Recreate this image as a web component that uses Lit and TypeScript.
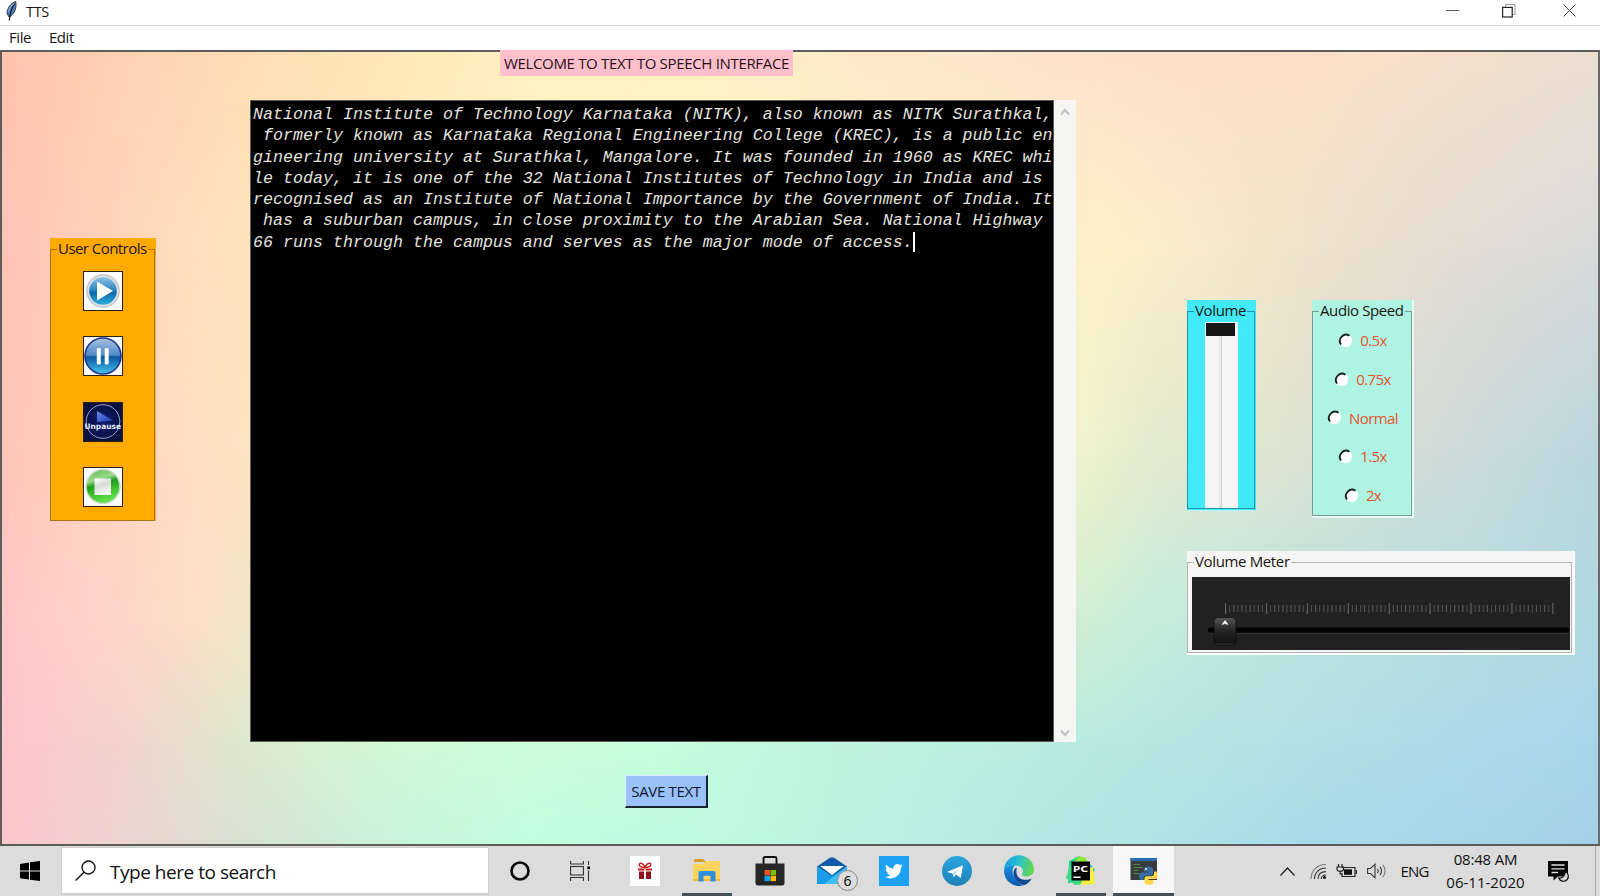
import { LitElement, html, css, svg } from "lit";
import { customElement, state } from "lit/decorators.js";

const LINES = [
  "National Institute of Technology Karnataka (NITK), also known as NITK Surathkal,",
  " formerly known as Karnataka Regional Engineering College (KREC), is a public en",
  "gineering university at Surathkal, Mangalore. It was founded in 1960 as KREC whi",
  "le today, it is one of the 32 National Institutes of Technology in India and is ",
  "recognised as an Institute of National Importance by the Government of India. It",
  " has a suburban campus, in close proximity to the Arabian Sea. National Highway ",
  "66 runs through the campus and serves as the major mode of access.",
];

const SPEEDS = ["0.5x", "0.75x", "Normal", "1.5x", "2x"];

/* ---------- group box ---------- */
@customElement("group-box")
class GroupBox extends LitElement {
  static properties = { label: {} };
  declare label: string;
  static styles = css`
    :host { display: block; box-sizing: border-box; font: 15px "Open Sans", "Noto Sans", sans-serif; color: #1c1410; }
    fieldset { box-sizing: border-box; height: 100%; margin: 0; padding: 0; min-width: 0;
      border: 1px solid var(--line, #888); }
    legend { margin-left: 6px; padding: 0 1px; line-height: 21px; height: 22px; white-space: nowrap;
      letter-spacing: var(--track, -0.4px); }
  `;
  render() {
    return html`<fieldset><legend>${this.label}</legend><slot></slot></fieldset>`;
  }
}

/* ---------- left hand buttons ---------- */
@customElement("user-controls")
class UserControls extends LitElement {
  static styles = css`
    :host { display: block; }
    group-box { height: 283px; width: 106px; padding: 0 1px 0 0; background: #ffaa00; --line: #a87414; --track: -0.55px; }
    .stack { display: flex; flex-direction: column; align-items: center; gap: 25.3px; padding: 11px 0 0 1px; }
    button { width: 40px; height: 40px; padding: 0; border: 1px solid #2a2010; background: #fff; display: block; }
    svg { display: block; width: 38px; height: 38px; }
    .cap { font: bold 7.6px "DejaVu Sans", sans-serif; fill: #e8ecf8; }
  `;
  render() {
    return html`<group-box label="User Controls"><div class="stack">
      <button><svg viewBox="0 0 38 38">
        <defs><linearGradient id="a" x1="0" y1="0" x2="0" y2="1"><stop offset="0" stop-color="#8fc4e4"/><stop offset=".45" stop-color="#2b86c0"/><stop offset=".55" stop-color="#0c69a8"/><stop offset="1" stop-color="#2fb0e0"/></linearGradient></defs>
        <circle cx="19" cy="19" r="16.8" fill="#c3c6ca"/><circle cx="19" cy="19" r="15.4" fill="#dde0e3"/>
        <circle cx="19" cy="19" r="13.8" fill="url(#a)"/><path d="M13 9.5 L29 19 L13 28.500Z" fill="#fff"/></svg></button>
      <button><svg viewBox="0 0 38 38">
        <defs><linearGradient id="b" x1="0" y1="0" x2="0" y2="1"><stop offset="0" stop-color="#a9c3e2"/><stop offset=".48" stop-color="#4e88c4"/><stop offset=".52" stop-color="#0a57a0"/><stop offset="1" stop-color="#45c4ee"/></linearGradient></defs>
        <circle cx="19" cy="19" r="18" fill="url(#b)" stroke="#24308c" stroke-width="1.6"/>
        <rect x="12.800" y="11" width="4" height="16.500" rx="1.500" fill="#fff"/><rect x="20.700" y="11" width="4" height="16.500" rx="1.500" fill="#fff"/></svg></button>
      <button><svg viewBox="0 0 38 38">
        <defs><linearGradient id="c" x1="0" y1="0" x2="1" y2="1"><stop offset="0" stop-color="#6a8af0"/><stop offset="1" stop-color="#1c36a8"/></linearGradient>
        <radialGradient id="d"><stop offset="0" stop-color="#0e1c70"/><stop offset="1" stop-color="#0a1040"/></radialGradient></defs>
        <rect width="38" height="38" fill="url(#d)"/><circle cx="19" cy="18.500" r="16.800" fill="none" stroke="#98a4cc" stroke-width="1"/>
        <path d="M13 8 L29 17.500 L13 19Z" fill="url(#c)"/><text class="cap" x="0.500" y="25.500" textLength="36.500" lengthAdjust="spacingAndGlyphs">Unpause</text></svg></button>
      <button><svg viewBox="0 0 38 38">
        <defs><linearGradient id="e" x1="0" y1="0" x2=".3" y2="1"><stop offset="0" stop-color="#5cb84c"/><stop offset=".35" stop-color="#9cdc8a"/><stop offset=".5" stop-color="#1f9c1a"/><stop offset="1" stop-color="#5fe048"/></linearGradient>
        <linearGradient id="f" x1="0" y1="0" x2=".4" y2="1"><stop offset="0" stop-color="#fff"/><stop offset=".5" stop-color="#d8dcd8"/><stop offset="1" stop-color="#fafafa"/></linearGradient></defs>
        <circle cx="19" cy="18.500" r="17.800" fill="#cfdccf"/><circle cx="19" cy="18.500" r="16.200" fill="url(#e)"/>
        <rect x="10.500" y="10.500" width="16.500" height="16.500" fill="url(#f)"/></svg></button>
    </div></group-box>`;
  }
}

/* ---------- editor ---------- */
@customElement("text-editor")
class TextEditor extends LitElement {
  static styles = css`
    :host { display: flex; width: 826px; height: 642px; }
    .page { width: 804px; box-sizing: border-box; background: #000; border: 1px solid #5a5a58; padding: 3px 0 0 2px; overflow: hidden; }
    .line { white-space: pre; font: italic 16.64px/21.25px "Liberation Mono", monospace; letter-spacing: 0.018px; color: #e2e2de; height: 21.25px; display: flex; align-items: center; }
    .caret { width: 2px; height: 20px; background: #fff; }
    .bar { width: 22px; background: #f5f5f4; display: flex; flex-direction: column; justify-content: space-between; align-items: center; padding: 8px 0 5px; box-sizing: border-box; }
    svg { width: 10px; height: 8px; display: block; fill: none; stroke: #c4c4c4; stroke-width: 2.2; }
  `;
  render() {
    return html`<div class="page">${LINES.map((l, i) => html`<div class="line">${l}${i === LINES.length - 1 ? html`<span class="caret"></span>` : ""}</div>`)}</div>
      <div class="bar"><svg viewBox="0 0 10 8"><path d="M1 6.500 L5 2 L9 6.500"/></svg><svg viewBox="0 0 10 8"><path d="M1 1.500 L5 6 L9 1.500"/></svg></div>`;
  }
}

/* ---------- right hand panels ---------- */
@customElement("audio-panels")
class AudioPanels extends LitElement {
  static styles = css`
    :host { display: flex; flex-direction: column; width: 388px; gap: 33px; }
    .top { display: flex; gap: 56px; align-items: flex-start; }
    .vol { width: 69px; height: 211px; background: #42e9f9; --line: #2594a6; --track: -0.35px; padding-right: 1px; padding-bottom: 1px; border-bottom: 1px solid #b8f8fc; }
    .trough { width: 33px; height: 186px; margin: 0 0 0 17px; background: #f5f5f5; display: flex; flex-direction: column; align-items: center; }
    .knob { width: 29px; height: 13px; margin: 1px 2px 0 0; background: #161616; }
    .groove { width: 3px; flex: 1; background: #e9e9e9; border: solid #d2d2d2; border-width: 0 1px 1px 0; box-sizing: border-box; margin-right: 2px; }
    .speed { width: 102px; height: 218px; background: #aff4e3; --line: #7d9c98; --track: -0.4px; border: solid #e9faf6; border-width: 0 2px 2px 0; }
    .options { display: flex; flex-direction: column; align-items: center; margin: -1px 0 0 1px; }
    label { display: flex; align-items: center; height: 38.700px; gap: 7px; color: #e2552e; letter-spacing: -0.6px; }
    label svg { width: 15px; height: 15px; }
    .meter { width: 388px; height: 104px; background: #f5f5f5; --line: #b4b4b4; --track: -0.36px; border: solid #fff; border-width: 0 2px 2px 0; padding-right: 1px; }
    .meter svg { display: block; width: 378px; height: 73px; margin: 4px 0 0 4px; }
  `;
  render() {
    const ticks = Array.from({ length: 81 }, (_, i) => {
      const major = i % 10 === 0;
      return svg`<rect x=${33 + i * 4.09} y=${major ? 26 : 28} width="1.200" height=${major ? 11 : i % 5 ? 7 : 8} fill=${major ? "#606060" : i % 2 ? "#484848" : "#555"}/>`;
    });
    return html`
      <div class="top">
        <group-box class="vol" label="Volume"><div class="trough"><div class="knob"></div><div class="groove"></div></div></group-box>
        <group-box class="speed" label="Audio Speed"><div class="options">${SPEEDS.map((s) => html`<label>
          <svg viewBox="0 0 15 15"><circle cx="7.500" cy="7.500" r="6.600" fill="#fff" /><path d="M3 11.500 A6.200 6.200 0 0 1 11.500 2.800" fill="none" stroke="#1a2423" stroke-width="1.900"/></svg><span>${s}</span></label>`)}</div></group-box>
      </div>
      <group-box class="meter" label="Volume Meter"><svg viewBox="0 0 378 73">
        <defs><linearGradient id="k" x1="0" y1="0" x2="0" y2="1"><stop offset="0" stop-color="#565656"/><stop offset=".45" stop-color="#262626"/><stop offset=".9" stop-color="#141414"/><stop offset="1" stop-color="#333"/></linearGradient></defs>
        <rect width="378" height="73" fill="#212121"/>${ticks}
        <rect x="16" y="50.500" width="361" height="5" rx="2" fill="#020202"/><rect x="18" y="56" width="359" height="1" fill="#303030"/>
        <rect x="22" y="40.500" width="22" height="28" rx="4" fill="url(#k)" stroke="#101010" stroke-width=".8"/>
        <path d="M30 47.500 L33 43.500 L36 47.500 L33 46.500Z" fill="#fff" stroke="#fff" stroke-width=".6"/></svg></group-box>`;
  }
}

/* ---------- taskbar ---------- */
@customElement("task-bar")
class TaskBar extends LitElement {
  static styles = css`
    :host { display: flex; height: 50px; background: #dcdcdc; align-items: stretch; font-family: "Open Sans", "Noto Sans", sans-serif; color: #111; }
    svg { display: block; overflow: visible; }
    .start { width: 61px; display: flex; align-items: center; justify-content: center; padding-right: 1px; box-sizing: border-box; }
    .search { width: 428px; margin: 1px 0 1px; box-sizing: border-box; border: 1px solid #cfcfcf; border-bottom-width: 2px; background: #fff; display: flex; align-items: center; padding-left: 13px; gap: 14px; font-size: 19px; letter-spacing: -0.47px; }
    .search span { padding-top: 2px; }
    .apps { display: flex; }
    .app { width: 62.350px; display: flex; align-items: center; justify-content: center; box-sizing: border-box; }
    .open { background: linear-gradient(#454f58, #454f58) center bottom / 50px 3px no-repeat; }
    .active { background: linear-gradient(#454f58, #454f58) center bottom / 61px 3px no-repeat, linear-gradient(#f7f7f7, #f7f7f7) center / 61px 100% no-repeat; }
    .view { margin-right: 5px; }
    .tray { margin-left: auto; display: flex; align-items: center; }
    .wifi { margin-left: 15px; }
    .power, .sound { margin-left: 10px; }
    .lang { font-size: 15px; letter-spacing: -0.8px; width: 28px; margin: 0 17px 0 14px; }
    .clock { width: 80px; text-align: center; font-size: 15px; line-height: 23.500px; letter-spacing: -0.2px; white-space: nowrap; }
    .clock .date { letter-spacing: 0; }
    .note { margin: 0 26.500px 0 22px; }
    .desk { width: 5px; height: 50px; border-left: 1px solid #a8a8a8; box-sizing: border-box; }
    .num { font: 14px "Open Sans", sans-serif; }
    .pc { font: bold 9.500px "Open Sans", sans-serif; fill: #fff; }
  `;
  render() {
    return html`
      <div class="start"><svg width="20" height="20" viewBox="0 0 20 20"><path d="M0 3 L9 1.500 V9.500 H0Z M10 1.300 L20 0 V9.500 H10Z M0 10.500 H9 V18.500 L0 17.200Z M10 10.500 H20 V20 L10 18.700Z" fill="#000"/></svg></div>
      <div class="search"><svg width="21" height="21" viewBox="0 0 21 21" fill="none" stroke="#111" stroke-width="1.400"><circle cx="13.500" cy="7.500" r="6.500"/><path d="M9 12.200 L.6 20.400"/></svg><span>Type here to search</span></div>
      <div class="apps">
        <div class="app"><svg width="20" height="20"><circle cx="10" cy="10" r="8.500" fill="none" stroke="#0a0a0a" stroke-width="2.600"/></svg></div>
        <div class="app"><svg class="view" width="20" height="20" viewBox="0 0 20 20" fill="none" stroke="#333" stroke-width="1.100"><path d="M.6 0 V3 H13.400 V0 M.6 20 V16.500 H13.400 V20"/><rect x=".6" y="5.500" width="12.800" height="8.500"/><path d="M18.500 0 V4 M18.500 9.500 V20"/><path d="M17.300 5.500 H20 V8.200 H17.300Z" fill="#000" stroke="none"/></svg></div>
        <div class="app"><svg width="30" height="30" viewBox="0 0 30 30"><rect width="30" height="30" fill="#fff"/><path d="M8 12.500 H14.300 V14.500 H8Z M15.700 12.500 H22 V14.500 H15.700Z" fill="#c8141c"/><path d="M9 15.500 H14 V23 H9Z M16 15.500 H21 V23 H16Z" fill="#94101a"/><path d="M15 11.500 C10 11.500 8.500 9.500 9.500 7.800 C11 6.200 14 8.500 15 11.500 C16 8.500 19 6.200 20.500 7.800 C21.500 9.500 20 11.500 15 11.500" fill="none" stroke="#c8141c" stroke-width="1.400"/></svg></div>
        <div class="app open"><svg width="28" height="24" viewBox="0 0 28 24"><path d="M1 1.500 Q1 0 2.500 0 H10 L13 3 H1Z" fill="#d99a1c"/><path d="M0 5 H10 L13 2 H27 V22 H0Z" fill="#ffd35c"/><path d="M0 20 H27 V22 H0Z" fill="#f2b93c"/><path d="M5.500 22.500 V13.500 Q5.500 12 7 12 H21 Q22.500 12 22.500 13.500 V22.500 H17.500 V16.800 H10.500 V22.500Z" fill="#2c8fe0"/></svg></div>
        <div class="app"><svg width="30" height="30" viewBox="0 0 30 30"><path d="M8.500 8 V2.500 Q8.500 1 10 1 H20 Q21.500 1 21.500 2.500 V8" fill="none" stroke="#111" stroke-width="1.900"/><path d="M.5 7.500 H29.500 V27 Q29.500 29.500 27 29.500 H3 Q.5 29.500 .5 27Z" fill="#262626"/><rect x="9.500" y="14" width="5.500" height="5.300" fill="#f25022"/><rect x="15.500" y="14" width="5.500" height="5.300" fill="#7fba00"/><rect x="9.500" y="19.800" width="5.500" height="5.300" fill="#00a4ef"/><rect x="15.500" y="19.800" width="5.500" height="5.300" fill="#ffb900"/></svg></div>
        <div class="app"><svg width="30" height="28" viewBox="0 0 30 28"><path d="M0 9.500 L13 .8 Q15 -.3 17 .8 L30 9.500 L15 20Z" fill="#0f5ba8"/><path d="M0 9.500 L15 19 L30 9.500 V27 H0Z" fill="#1c9be8"/><path d="M30 9.500 L7 27 H30Z" fill="#3fc0f6"/><path d="M3 9 L15 18 L27 9Z" fill="#fff"/><circle cx="30.500" cy="23.500" r="10" fill="#dcdcdc" stroke="#888" stroke-width="1"/><text class="num" x="26.500" y="28.700">6</text></svg></div>
        <div class="app"><svg width="30" height="30" viewBox="0 0 30 30"><rect width="30" height="30" fill="#1da1f2"/><path transform="translate(6 6.300) scale(.74)" d="M23.950 4.570a10 10 0 0 1-2.820.77 4.960 4.960 0 0 0 2.160-2.720c-.95.55-2 .95-3.120 1.180a4.920 4.920 0 0 0-8.380 4.480C7.690 8.090 4.070 6.130 1.640 3.160a4.820 4.820 0 0 0-.67 2.470c0 1.710.87 3.210 2.190 4.100a4.900 4.900 0 0 1-2.230-.62v.06a4.920 4.920 0 0 0 3.950 4.830 5 5 0 0 1-2.210.08 4.940 4.940 0 0 0 4.600 3.420A9.870 9.870 0 0 1 0 19.540a13.990 13.990 0 0 0 7.550 2.210c9.050 0 14-7.500 14-13.980 0-.21 0-.42-.02-.63a9.940 9.940 0 0 0 2.420-2.570z" fill="#fff"/></svg></div>
        <div class="app"><svg width="30" height="30" viewBox="0 0 30 30"><defs><linearGradient id="tg" x1="0" y1="0" x2="0" y2="1"><stop offset="0" stop-color="#2ea6de"/><stop offset="1" stop-color="#1d80b8"/></linearGradient></defs><circle cx="15" cy="15" r="15" fill="url(#tg)"/><path d="M5 16 L21 9.300 L18.800 22 L14 18.600 L11.800 21.200 L10.500 17.400Z" fill="#fff"/><path d="M10.500 17.400 L18 12 L12.600 18.200 L11.800 21.200Z" fill="#b8d8ec"/></svg></div>
        <div class="app"><svg width="30" height="30" viewBox="0 0 30 30"><defs><linearGradient id="e1" x1="0" y1=".2" x2="1" y2=".4"><stop offset="0" stop-color="#1b9de2"/><stop offset=".5" stop-color="#2cc0cf"/><stop offset="1" stop-color="#63d84e"/></linearGradient><linearGradient id="e2" x1="0" y1="0" x2="0" y2="1"><stop offset="0" stop-color="#1a8fe0"/><stop offset="1" stop-color="#0c58b4"/></linearGradient></defs>
          <path d="M0 15 A15 15 0 0 1 30 13.500 C30 18.500 26 20.500 22.500 20.500 C19 20.500 17.800 19 18 18 C20.500 15 18 9.500 12 9.500 C6 9.500 1.500 12.500 0 15Z" fill="url(#e1)"/>
          <path d="M0 15 C1 11.500 6 9.300 11 9.300 C8 12 8 17 10 21 C12.500 25.500 16.500 28.500 19.500 29.300 A15 15 0 0 1 0 15Z" fill="url(#e2)"/>
          <path d="M12.500 11.500 C9 13.500 8.600 18 10.500 22 C13 27 18 29 20 29.200 C24 27.800 26.500 25 27.700 22.500 C22 25.500 13.500 23.500 12.500 17 C12.200 14.500 13 12.500 12.500 11.500Z" fill="#134a94"/></svg></div>
        <div class="app open"><svg width="30" height="30" viewBox="0 0 30 30"><path d="M3 5 L13 0 L20 4 L14 26 L2 27Z" fill="#20d68c"/><path d="M0 22 L4 9 L18 28 L9 29Z" fill="#3ddc84"/><path d="M13 0 L20 2 L22 8 L8 6Z" fill="#8ee83c"/><path d="M24 8 L29 14 L24 20Z" fill="#18b8d8"/><path d="M22 12 L27 11 L29 28 L14 29 L18 22Z" fill="#f8f040"/><rect x="5.500" y="5.500" width="18.500" height="19" fill="#060606"/><text class="pc" x="6.700" y="15.500" textLength="15.500" lengthAdjust="spacingAndGlyphs">PC</text><rect x="7.500" y="20.500" width="7" height="1.500" fill="#fff"/></svg></div>
        <div class="app active"><svg width="30" height="30" viewBox="0 0 30 30"><path d="M1.500 2 H28 V24 H1.500Z" fill="#3a3d3e"/><path d="M1.500 2 H28 V5 H1.500Z" fill="#2c6cb4"/><path d="M4.500 8.500 H11 M4.500 11.500 H14 M4.500 14.500 H9 M4.500 17.500 H10" stroke="#4c8a48" stroke-width="1"/><path d="M19 10.500 Q15 10.500 15 13.500 V15.500 H20 V16.500 H13 Q10 16.500 10 20 Q10 24 13 24 H14.500 V21.500 Q14.500 19.500 17 19.500 H22 Q24 19.500 24 17.500 V13.500 Q24 10.500 19 10.500Z" fill="#366fa8"/><path d="M20 28.800 Q24.500 28.800 24.500 26 V24 H19.500 V23 H26.500 Q28.500 23 28.500 19.500 Q28.500 15.500 26.500 15.500 H25 V18 Q25 20.300 22.500 20.300 H17.500 Q15.500 20.300 15.500 22 V26 Q15.500 28.800 20 28.800Z" fill="#ffd848"/><circle cx="17" cy="13" r=".9" fill="#fff"/></svg></div>
      </div>
      <div class="tray">
        <svg width="15" height="9" viewBox="0 0 15 9" fill="none" stroke="#222" stroke-width="1.300"><path d="M.5 8.500 L7.500 1 L14.500 8.500"/></svg>
        <svg class="wifi" width="17" height="17" viewBox="0 0 17 17" fill="none" stroke="#333" stroke-width="1.100"><path d="M1 16 C1 7.500 7 1.500 16 1.500" stroke="#777"/><path d="M4.500 16 C4.500 9.500 9 5 16 5"/><path d="M8 16 C8 11.500 11 8.600 16 8.600"/><path d="M11.300 16 C11.300 13.500 13 12 16 12"/><circle cx="14.500" cy="14.600" r="1.500" fill="#111" stroke="none"/></svg>
        <svg class="power" width="20" height="15" viewBox="0 0 20 15" fill="none" stroke="#222" stroke-width="1.200"><path d="M5 3.500 H18 V12.500 H5 V9"/><path d="M19.300 6 V10"/><rect x="7" y="5.300" width="8" height="5.500" fill="#111" stroke="none"/><path d="M1.500 0 V3 M5 0 V3 M0 3 H6.500 V5 Q6.500 7.300 3.200 7.300 Q0 7.300 0 5Z M3.200 7.300 V10 H5"/></svg>
        <svg class="sound" width="20" height="16" viewBox="0 0 20 16" fill="none" stroke="#333" stroke-width="1.100"><path d="M.6 5.500 H3.500 L8 1.200 V14.800 L3.500 10.500 H.6Z"/><path d="M10.500 5.800 Q12 8 10.500 10.200 M13 3.800 Q16 8 13 12.200"/><path d="M15.800 1.800 Q20.300 8 15.800 14.200" stroke="#777"/></svg>
        <div class="lang">ENG</div>
        <div class="clock">08:48 AM<br /><span class="date">06-11-2020</span></div>
        <svg class="note" width="21" height="21" viewBox="0 0 21 21"><path d="M0 0 H20 V15.500 H10 L5.500 19.500 V15.500 H0Z" fill="#050505"/><path d="M3.500 4 H16.500 M3.500 7.800 H16.500 M3.500 11.500 H10" stroke="#dcdcdc" stroke-width="1.300"/><path d="M17 10.500 A5 5 0 1 1 10.700 17 A5.500 5.500 0 0 0 17 10.500Z" fill="#dcdcdc" stroke="#111" stroke-width="1.200"/></svg>
        <div class="desk"></div>
      </div>`;
  }
}

/* ---------- window ---------- */
@customElement("app-root")
class AppRoot extends LitElement {
  static styles = css`
    :host { display: flex; flex-direction: column; width: 1600px; height: 896px; overflow: hidden; background: #fff; font: 15px "Open Sans", "Noto Sans", sans-serif; color: #1a1418; }
    .title { height: 26px; box-sizing: border-box; display: flex; align-items: center; padding: 0 14px 4px 6px; border-bottom: 1px solid #d4d4d4; flex: none; }
    .title span { margin-left: 9px; font-size: 14.500px; letter-spacing: -0.3px; padding-top: 1px; }
    .title svg { display: block; }
    .win { margin-left: auto; display: flex; align-items: center; gap: 43px; }
    .close { margin: 0 10px 0 4px; }
    .menu { height: 24px; display: flex; align-items: center; gap: 18px; padding: 0 0 2px 9px; box-sizing: border-box; letter-spacing: -0.45px; flex: none; }
    .client { flex: 1; box-sizing: border-box; border: 2px solid #5e5c5a; border-right-color: #6a6a6a; display: grid; grid-template-columns: 248px 937px 1fr; position: relative; }
    .layer { position: absolute; inset: 0; }
    .r1 { background: linear-gradient(90deg, #ffc4ae 0, #ffd4b4 150px, #ffdfb4 260px, #ffe9b8 400px, #fff1c2 540px, #fdf3c3 700px, #fdeaca 850px, #fde5ca 1000px, #fde1cb 1150px, #fde0c8 1300px, #f5e0cc 1450px, #ecdfd2 1600px); }
    .r2 { background: linear-gradient(90deg, #ffc3b5 0, #ffdabc 150px, #ffe4bb 250px, #fff4c4 600px, #fdf0c8 1100px, #f8eacb 1200px, #efe2cb 1300px, #e2dcd2 1450px, #d8dadb 1600px);
      -webkit-mask-image: linear-gradient(180deg, transparent 0, #000 200px); }
    .r3 { background: linear-gradient(90deg, #ffc6ba 0, #ffcbbb 50px, #ffd9c2 150px, #ffe3c2 240px, #eff3cc 1080px, #e3ebd0 1150px, #dde4d0 1280px, #cedbd9 1450px, #b9d6de 1600px);
      -webkit-mask-image: linear-gradient(180deg, transparent 200px, #000 400px); }
    .r4 { background: linear-gradient(90deg, #ffc7c8 0, #ffd3ca 100px, #fbdfc8 200px, #f3e5c8 240px, #d0eed2 1080px, #c5ecdb 1150px, #bce2df 1300px, #b0d8e2 1600px);
      -webkit-mask-image: linear-gradient(180deg, transparent 400px, #000 570px); }
    .r5 { background: linear-gradient(90deg, #ffc6cc 0, #f2d2cc 120px, #dde8ce 240px, #d2fad8 400px, #c6ffdc 650px, #bdf3de 850px, #b6eae0 1100px, #b0e0e5 1300px, #a6d6ea 1600px);
      -webkit-mask-image: linear-gradient(180deg, transparent 570px, #000 690px); }
    .r6 { background: linear-gradient(90deg, #fdc6cc 0, #ecd3d0 120px, #d6e2d2 250px, #c8f4da 400px, #c0ffe0 530px, #bef9de 700px, #b8efe2 900px, #b0e5e4 1100px, #a8dbe8 1300px, #a3d1e8 1600px);
      -webkit-mask-image: linear-gradient(180deg, transparent 690px, #000 792px); }
    .col { position: relative; z-index: 1; }
    .left { padding: 186px 0 0 48px; }
    .right { padding: 248px 0 0 0; }
    .mid { display: flex; flex-direction: column; align-items: flex-start; }
    .welcome { margin: -2px 0 0 250px; width: 293px; height: 26px; line-height: 26px; background: #ffc0cb; text-align: center; letter-spacing: -0.33px; color: #241018; white-space: nowrap; }
    text-editor { margin-top: 24px; }
    .save { margin: 33px 0 0 375px; width: 83px; height: 33px; box-sizing: border-box; padding: 0 0 1px; border: solid; border-width: 1px 2px 2px 1px; border-color: #dcecff #1c2430 #1c2430 #dcecff; background: #99c2fb; font: inherit; letter-spacing: -0.35px; color: #101828; white-space: nowrap; }
  `;
  @state() private rows = ["r1", "r2", "r3", "r4", "r5", "r6"];
  render() {
    return html`
      <div class="title">
        <svg width="11" height="20" viewBox="0 0 11 20"><path d="M9.800 .5 C5 2 1 7 1 12.500 L3 16 C8 13.500 11 8 9.800 .5Z" fill="#4a7cb8" stroke="#26303c" stroke-width=".9"/><path d="M8.500 3 C5.500 7 4 11 3.300 19.500" fill="none" stroke="#0c1420" stroke-width="1.200"/><path d="M8 2.500 C5 4.500 3 8 2.500 11" fill="none" stroke="#9cc0e4" stroke-width="1"/></svg>
        <span>TTS</span>
        <div class="win">
          <svg width="13" height="13"><path d="M0 6.500 H13" stroke="#555" stroke-width="1"/></svg>
          <svg width="14" height="14" fill="none"><path d="M3.500 3 V.5 H13 V10.500 H10.500" stroke="#999"/><rect x=".6" y="3.400" width="9.600" height="9.600" stroke="#222" stroke-width="1.200"/></svg>
          <svg class="close" width="13" height="13"><path d="M.5 .5 L12.500 12.500 M12.500 .5 L.5 12.500" stroke="#444" stroke-width="1"/></svg>
        </div>
      </div>
      <div class="menu"><span>File</span><span>Edit</span></div>
      <div class="client">
        ${this.rows.map((r) => html`<div class="layer ${r}"></div>`)}
        <div class="col left"><user-controls></user-controls></div>
        <div class="col mid">
          <div class="welcome">WELCOME TO TEXT TO SPEECH INTERFACE</div>
          <text-editor></text-editor>
          <button class="save">SAVE TEXT</button>
        </div>
        <div class="col right"><audio-panels></audio-panels></div>
      </div>
      <task-bar></task-bar>`;
  }
}
